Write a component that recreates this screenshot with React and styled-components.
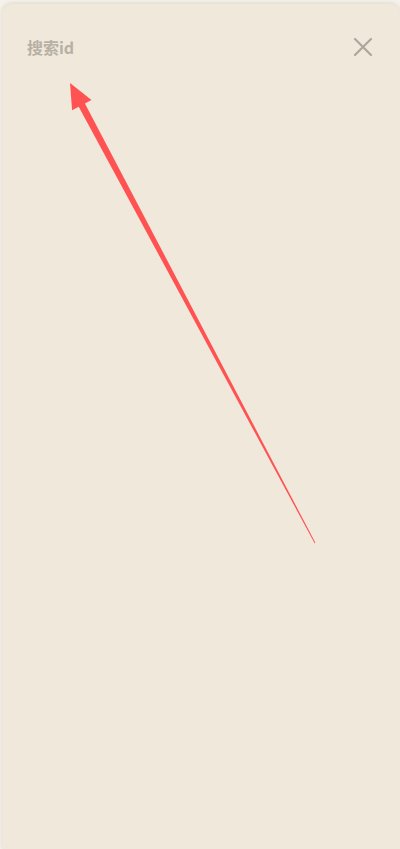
import React from 'react';
import styled, { createGlobalStyle } from 'styled-components';

const GlobalStyle = createGlobalStyle`
  html, body {
    margin: 0;
    padding: 0;
    height: 100%;
    background: #f5f2eb;
    overflow: hidden;
  }
  #root {
    height: 100%;
  }
`;

const Page = styled.div`
  position: relative;
  height: 100%;
  padding: 4px 0 0 2px;
  box-sizing: border-box;
`;

const Sheet = styled.div`
  height: 100%;
  background: #f0e8da;
  border-radius: 10px 10px 0 0;
  box-shadow: 0 -1px 4px rgba(120, 100, 70, 0.18);
`;

const Header = styled.div`
  display: flex;
  align-items: center;
  justify-content: space-between;
  padding: 32px 27px 0 25px;
`;

const SearchLabel = styled.span`
  font-family: 'Noto Sans CJK SC', 'Noto Sans', sans-serif;
  font-size: 16px;
  font-weight: 700;
  line-height: 22px;
  color: #b6b0a5;
`;

const CloseButton = styled.button`
  display: flex;
  align-items: center;
  justify-content: center;
  width: 20px;
  height: 20px;
  padding: 0;
  border: 0;
  background: none;
  color: #aca69c;
  cursor: pointer;
`;

const ArrowLayer = styled.svg`
  position: absolute;
  left: 0;
  top: 0;
  pointer-events: none;
`;

const CloseIcon = () => (
  <svg width="20" height="20" viewBox="0 0 20 20">
    <path d="M2 2 L18 18 M18 2 L2 18" stroke="currentColor" strokeWidth="2.2" strokeLinecap="round" />
  </svg>
);

export default function App() {
  return (
    <>
      <GlobalStyle />
      <Page>
        <Sheet>
          <Header>
            <SearchLabel>搜索id</SearchLabel>
            <CloseButton aria-label="关闭">
              <CloseIcon />
            </CloseButton>
          </Header>
        </Sheet>
        <ArrowLayer width="400" height="849" viewBox="0 0 400 849">
          <polygon
            points="70,83 91.5,99.9 84.9,103.5 315.4,542.8 314.6,543.2 78.7,106.7 72.1,110.3"
            fill="#ff5252"
          />
        </ArrowLayer>
      </Page>
    </>
  );
}
